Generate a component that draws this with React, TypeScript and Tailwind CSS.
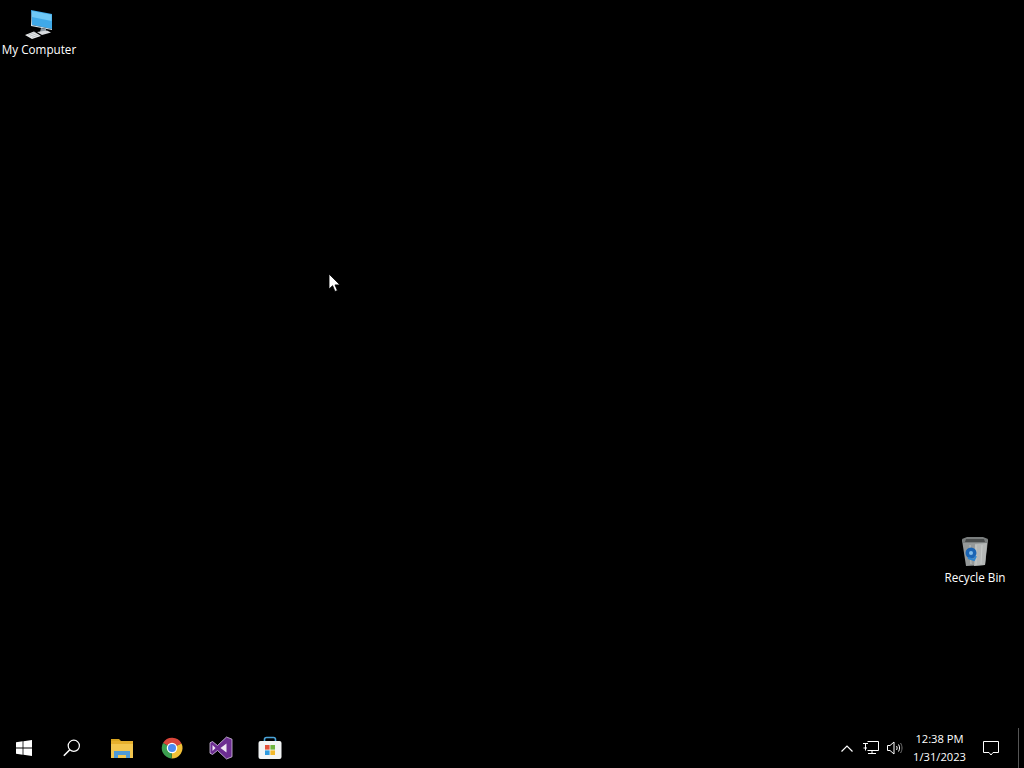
import React from "react";

const font = "font-['Open_Sans','Noto_Sans',sans-serif]";

const ComputerIcon = () => (
  <svg width="32" height="32" viewBox="0 0 32 32">
    <polygon points="8,2 29,6 29,21 9,17" fill="#3fa9e8" />
    <polygon points="9,3 28.5,6.7 28.5,13 9,9" fill="#6fc8f5" />
    <polygon points="8,2 9,17 29,21 29,22 8,18" fill="#cfe3ee" />
    <polygon points="18,20 23,21 23,25 17,24" fill="#8f9aa3" />
    <polygon points="14,24 24,22.5 28,24.5 19,27" fill="#d8dcdf" />
    <polygon points="2,27 11,23.5 18,28 9,31" fill="#e9ebec" />
    <path d="M5 27l7-2.6M7 28.2l7-2.6M9 29.4l7-2.6" stroke="#9ea4a8" strokeWidth="0.6" />
  </svg>
);

const RecycleBinIcon = () => (
  <svg width="32" height="32" viewBox="0 0 32 32">
    <polygon points="3,4 29,4 26,29 7,30" fill="#959999" />
    <polygon points="16,8 28,7 26,29 15,30" fill="#b4b7b6" />
    <polygon points="3,3 8,1 24,1 29,3 28,7 4,7" fill="#7a7e7e" />
    <polygon points="7,3 25,3 26,6 6,6" fill="#4a4d4d" />
    <path d="M11 9l1 19M17 9v20M23 9l-1 19" stroke="#cfd2d1" strokeWidth="0.7" />
    <circle cx="12" cy="17" r="5.5" fill="#1a64b4" />
    <circle cx="12" cy="17" r="2" fill="#7fbcea" />
    <path d="M9 22l6 2 2-4" stroke="#2f86d2" strokeWidth="2" fill="none" />
  </svg>
);

const WindowsIcon = () => (
  <svg width="16" height="16" viewBox="0 0 16 16" fill="#fff">
    <polygon points="0,2.2 6.6,1.3 6.6,7.6 0,7.6" />
    <polygon points="7.4,1.2 16,0 16,7.6 7.4,7.6" />
    <polygon points="0,8.4 6.6,8.4 6.6,14.7 0,13.8" />
    <polygon points="7.4,8.4 16,8.4 16,16 7.4,14.8" />
  </svg>
);

const SearchIcon = () => (
  <svg width="18" height="18" viewBox="0 0 18 18" fill="none" stroke="#fff">
    <circle cx="10.8" cy="6.8" r="5.6" strokeWidth="1.2" />
    <path d="M6.8 10.8L0.8 16.8" strokeWidth="1.6" />
  </svg>
);

const FolderIcon = () => (
  <svg width="24" height="20" viewBox="0 0 24 20">
    <path d="M1 1h8l2 2h12v3H1z" fill="#d9a520" />
    <rect x="1" y="3" width="22" height="17" fill="#f3c64f" />
    <rect x="1" y="3" width="22" height="3" fill="#e6b02e" />
    <path d="M4 20v-7h16v7h-4v-3H8v3z" fill="#4f9ad6" />
  </svg>
);

const ChromeIcon = () => (
  <svg width="24" height="24" viewBox="0 0 48 48">
    <path d="M24 24L6 14A21 21 0 0 1 43 15z" fill="#d9453a" />
    <path d="M24 24L43 15A21 21 0 0 1 23 45z" fill="#f2c037" />
    <path d="M24 24L23 45A21 21 0 0 1 6 14z" fill="#3c9f50" />
    <circle cx="24" cy="24" r="10.5" fill="#fff" />
    <circle cx="24" cy="24" r="8" fill="#4c8bf0" />
  </svg>
);

const VisualStudioIcon = () => (
  <svg width="24" height="24" viewBox="0 0 24 24">
    <path
      d="M17.5 1L23 3.2V20.8L17.5 23L8.5 14.5L3.5 18.5L1 17.2V6.8L3.5 5.5L8.5 9.5z"
      fill="#6c2d91"
      stroke="#d9c8e6"
      strokeWidth="0.8"
    />
    <path d="M17.5 7.5V16.5L11.5 12z" fill="#f0e8f5" />
    <path d="M3.5 9V15L6.5 12z" fill="#f0e8f5" />
  </svg>
);

const StoreIcon = () => (
  <svg width="24" height="24" viewBox="0 0 24 24">
    <path d="M6.5 6V3.5A2 2 0 0 1 8.5 1.5H15.5A2 2 0 0 1 17.5 3.5V6" fill="none" stroke="#4aa3d8" strokeWidth="1.6" />
    <rect x="0.5" y="5" width="23" height="18" rx="2" fill="#f2f4f5" />
    <rect x="7" y="9" width="4.6" height="4.6" fill="#e2513a" />
    <rect x="12.4" y="9" width="4.6" height="4.6" fill="#6fb43f" />
    <rect x="7" y="14.4" width="4.6" height="4.6" fill="#2f9be0" />
    <rect x="12.4" y="14.4" width="4.6" height="4.6" fill="#f2b92c" />
  </svg>
);

const ChevronIcon = () => (
  <svg width="12" height="7" viewBox="0 0 12 7" fill="none" stroke="#fff" strokeWidth="1.2">
    <path d="M0.5 6.5L6 1l5.5 5.5" />
  </svg>
);

const NetworkIcon = () => (
  <svg width="16" height="14" viewBox="0 0 16 14" fill="none" stroke="#fff" strokeWidth="1">
    <path d="M4.5 0.5H15.5V9.5H4.5M2.5 7V9.500" />
    <path d="M0 2.5h5M2.5 2.5V7M0.5 7h3.5M9 9.5v3M5 12.5h8" />
  </svg>
);

const VolumeIcon = () => (
  <svg width="16" height="14" viewBox="0 0 16 14" fill="none" stroke="#fff" strokeWidth="1">
    <path d="M0.5 4.5H3L7 1v12L3 9.5H0.5z" />
    <path d="M9.5 5c.8 1.2.8 2.8 0 4M11.5 3.5c1.4 2 1.4 5 0 7" />
    <path d="M13.5 2c2 3 2 7 0 10" stroke="#777" />
  </svg>
);

const NotificationIcon = () => (
  <svg width="16" height="15" viewBox="0 0 16 15" fill="none" stroke="#fff" strokeWidth="1">
    <path d="M0.5 0.5h15v11H10L8 14l-2-2.500H0.5z" />
  </svg>
);

const DesktopIcon = ({ label, icon, className }: { label: string; icon: React.ReactNode; className: string }) => (
  <div className={`absolute flex w-[76px] flex-col items-center ${className}`}>
    {icon}
    <span className="mt-[1px] text-[11.7px] leading-[16px] text-white whitespace-nowrap">{label}</span>
  </div>
);

const pinned = [
  { name: "search", icon: <SearchIcon />, w: "w-[48px]" },
  { name: "explorer", icon: <FolderIcon />, w: "w-[52px]" },
  { name: "chrome", icon: <ChromeIcon />, w: "w-[48px]" },
  { name: "vs", icon: <VisualStudioIcon />, w: "w-[50px]" },
  { name: "store", icon: <StoreIcon />, w: "w-[48px]" },
];

export default function App() {
  return (
    <div className={`flex h-[768px] w-[1024px] flex-col overflow-hidden bg-black ${font}`}>
      <div className="relative flex-1">
        <DesktopIcon label="My Computer" icon={<ComputerIcon />} className="left-[1px] top-[8px]" />
        <DesktopIcon label="Recycle Bin" icon={<RecycleBinIcon />} className="left-[937px] top-[536px]" />
        {/* mouse pointer */}
        <svg className="absolute left-[328px] top-[273px]" width="13" height="20" viewBox="0 0 13 20">
          <path d="M1 1v15l3.6-3.3 2.4 5.8 2.4-1-2.4-5.600h5z" fill="#fff" stroke="#000" strokeWidth="0.8" />
        </svg>
      </div>

      <div className="flex h-[40px] items-center bg-black">
        <div className="flex h-full w-[48px] items-center justify-center">
          <WindowsIcon />
        </div>
        {pinned.map((p) => (
          <div key={p.name} className={`flex h-full items-center justify-center ${p.w}`}>
            {p.icon}
          </div>
        ))}

        <div className="ml-auto flex h-full items-center">
          <div className="flex w-[24px] justify-center">
            <ChevronIcon />
          </div>
          <div className="flex w-[24px] justify-center">
            <NetworkIcon />
          </div>
          <div className="flex w-[23px] justify-center">
            <VolumeIcon />
          </div>
          <div className="flex w-[67px] flex-col items-center text-[11.2px] leading-[18px] text-white">
            <span>12:38 PM</span>
            <span>1/31/2023</span>
          </div>
          <div className="flex w-[36px] justify-center">
            <NotificationIcon />
          </div>
          <div className="ml-[9px] h-full w-[6px] border-l border-[#555]" />
        </div>
      </div>
    </div>
  );
}
